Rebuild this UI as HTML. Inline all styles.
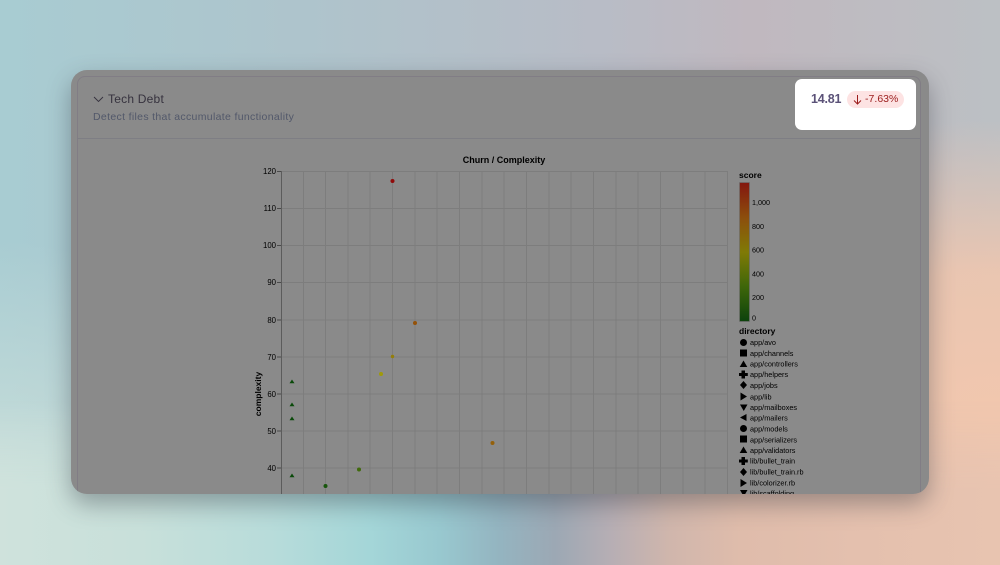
<!DOCTYPE html>
<html><head><meta charset="utf-8">
<style>
html,body{margin:0;padding:0;width:1000px;height:565px;overflow:hidden}
body{position:relative;font-family:"Liberation Sans",sans-serif;background:
radial-gradient(ellipse 400px 300px at 990px 420px,#f2c7ae 0%,rgba(238,198,175,.9) 50%,rgba(238,198,175,0) 100%),
radial-gradient(ellipse 280px 300px at 0px 540px,#cfe2dc 0%,rgba(207,226,220,0) 100%),
linear-gradient(90deg,#a8ccd2 0%,#aec4cc 30%,#b8bcc6 60%,#c0b8bf 75%,#bcc0c4 100%)}
.band{position:absolute;left:0;top:400px;width:1000px;height:165px;
background:linear-gradient(90deg,#cfe2dc 0,#c8e0da 140px,#b8dcda 270px,#a4d6d8 370px,#98c8cf 440px,#94b4c0 500px,#9ca8b4 555px,#b6aeb4 610px,#d0b6ac 670px,#dfbcab 740px,#e4c0ae 860px,#e8c4b0 1000px);
-webkit-mask-image:linear-gradient(180deg,rgba(0,0,0,0) 0,rgba(0,0,0,1) 90px);mask-image:linear-gradient(180deg,rgba(0,0,0,0) 0,rgba(0,0,0,1) 90px)}
.card{position:absolute;left:71px;top:70px;width:858px;height:424px;background:#8a8a8a;border-radius:16px;box-shadow:0 10px 24px rgba(50,55,65,.4);overflow:hidden}
.inner{position:absolute;left:6px;top:6px;width:844px;height:430px;border:1px solid #817d85;box-sizing:border-box;border-radius:8px 8px 0 0}
.div{position:absolute;left:6px;top:68px;width:844px;height:1px;background:#7e7e84}
.title{position:absolute;left:108px;top:92px;font:12px/14px "Liberation Sans",sans-serif;letter-spacing:.22px;color:#36323e}
.sub{position:absolute;left:93px;top:111px;font:10.5px/13px "Liberation Sans",sans-serif;letter-spacing:.33px;color:#52586a}
.hl{position:absolute;left:795px;top:79px;width:121px;height:51px;background:#fff;border-radius:7px}
.val{position:absolute;left:811px;top:92px;font:bold 12.5px/15px "Liberation Sans",sans-serif;letter-spacing:-.2px;color:#5b5278}
.badge{position:absolute;left:847px;top:91px;width:57px;height:17px;background:#fde3e3;border-radius:9px}
.badge span{position:absolute;left:18px;top:2px;font:10.5px/13px "Liberation Sans",sans-serif;letter-spacing:.02px;color:#9b1c1c;white-space:nowrap}
svg{position:absolute;left:0;top:0}
svg text{font-family:"Liberation Sans",sans-serif;fill:#000}
.soft{filter:blur(.3px)}
</style></head>
<body>
<div class="band"></div>
<div class="card"><div class="inner"></div><div class="div"></div></div>
<svg width="1000" height="565" viewBox="0 0 1000 565">
<defs>
<linearGradient id="g" x1="0" y1="1" x2="0" y2="0">
<stop offset="0" stop-color="#0c420c"/><stop offset=".25" stop-color="#3e660a"/><stop offset=".5" stop-color="#807a06"/><stop offset=".75" stop-color="#8c4e0c"/><stop offset="1" stop-color="#84160e"/>
</linearGradient>
<clipPath id="c"><rect x="71" y="70" width="858" height="424"/></clipPath>
</defs>
<path d="M94 97l4.500 4.500 4.500-4.500" fill="none" stroke="#36323e" stroke-width=".9"/>
<g clip-path="url(#c)"><g class="soft">
<text x="504" y="163" font-size="9" font-weight="bold" text-anchor="middle">Churn / Complexity</text>
<g stroke="#7d7d7d" stroke-width="1" fill="none">
<path d="M303.500 171V494M325.500 171V494M348 171V494M370 171V494M392.500 171V494M415 171V494M437 171V494M459.500 171V494M482 171V494M504 171V494M526.500 171V494M549 171V494M571 171V494M593.500 171V494M616 171V494M638 171V494M660.500 171V494M683 171V494M705 171V494M727.500 171V494"/>
<path d="M281 171.500H728M281 208.500H728M281 245.500H728M281 282.500H728M281 320H728M281 357H728M281 394H728M281 431H728M281 468H728"/>
</g>
<path d="M281.500 171V494" stroke="#5c5c5c" stroke-width="1"/>
<path d="M277 171.500H281M277 208.500H281M277 245.500H281M277 282.500H281M277 320H281M277 357H281M277 394H281M277 431H281M277 468H281" stroke="#4a4a4a" stroke-width="1"/>
<g font-size="7.800" text-anchor="end">
<text x="276" y="174">120</text><text x="276" y="211">110</text><text x="276" y="248">100</text><text x="276" y="285">90</text><text x="276" y="323">80</text><text x="276" y="360">70</text><text x="276" y="397">60</text><text x="276" y="434">50</text><text x="276" y="471">40</text>
</g>
<text transform="translate(262 394) rotate(-90)" font-size="8.500" font-weight="bold" text-anchor="middle" y="-1">complexity</text>
<circle cx="392.500" cy="181" r="2" fill="#900a0a"/>
<circle cx="415" cy="323" r="2" fill="#94520a"/>
<circle cx="392.500" cy="356.500" r="1.700" fill="#947e0a"/>
<circle cx="381" cy="374" r="2" fill="#a09a0a"/>
<circle cx="492.500" cy="443" r="2" fill="#94600a"/>
<circle cx="359" cy="469.500" r="2" fill="#406a0c"/>
<circle cx="325.500" cy="486" r="2" fill="#18560c"/>
<g fill="#0a4a0a">
<path d="M292 379.500l2.500 3.800h-5zM292 402.500l2.500 3.800h-5zM292 416.500l2.500 3.800h-5zM292 473.500l2.500 3.800h-5z"/>
</g>
<text x="739" y="178" font-size="8.500" font-weight="bold">score</text>
<rect x="739.500" y="182.500" width="10" height="139" fill="url(#g)" stroke="#6e6e6e" stroke-width=".7"/>
<g font-size="7.200">
<text x="752" y="205">1,000</text><text x="752" y="229">800</text><text x="752" y="252.500">600</text><text x="752" y="276.500">400</text><text x="752" y="300">200</text><text x="752" y="320.500">0</text>
</g>
<text x="739" y="334" font-size="8.500" font-weight="bold">directory</text>
<g font-size="7.300" fill="#000">
<text x="750" y="345">app/avo</text>
<text x="750" y="356">app/channels</text>
<text x="750" y="366.500">app/controllers</text>
<text x="750" y="377">app/helpers</text>
<text x="750" y="388">app/jobs</text>
<text x="750" y="399.500">app/lib</text>
<text x="750" y="410">app/mailboxes</text>
<text x="750" y="420.500">app/mailers</text>
<text x="750" y="431.500">app/models</text>
<text x="750" y="442.500">app/serializers</text>
<text x="750" y="453">app/validators</text>
<text x="750" y="463.500">lib/bullet_train</text>
<text x="750" y="474.500">lib/bullet_train.rb</text>
<text x="750" y="485.500">lib/colorizer.rb</text>
<text x="750" y="496">lib/scaffolding</text>
</g>
<g fill="#000">
<circle cx="743.500" cy="342.500" r="3.500"/>
<rect x="740" y="349.500" width="7" height="7"/>
<path d="M743.500 360.500l3.800 6.500h-7.600z"/>
<path d="M741.500 370.500h3.500v2.500h2.800v3h-2.800v2.500h-3.500v-2.500h-2.500v-3h2.500z"/>
<path d="M743.500 381l3.500 4-3.500 4-3.500-4z"/>
<path d="M740.500 392.500l6.500 4-6.500 4z"/>
<path d="M740 404.500h7.500l-3.750 6.500z"/>
<path d="M746.500 414v7l-6.500-3.500z"/>
<circle cx="743.500" cy="428.500" r="3.500"/>
<rect x="740" y="435.500" width="7" height="7"/>
<path d="M743.500 446.500l3.800 6.500h-7.600z"/>
<path d="M741.500 457h3.500v2.500h2.800v3h-2.800v2.500h-3.500v-2.500h-2.500v-3h2.500z"/>
<path d="M743.500 468l3.500 4-3.500 4-3.500-4z"/>
<path d="M740.500 479l6.500 4-6.500 4z"/>
<path d="M740 490h7.500l-3.750 6.500z"/>
</g>
</g></g>
</svg>
<div class="title">Tech Debt</div>
<div class="sub">Detect files that accumulate functionality</div>
<div class="hl"></div>
<div class="val">14.81</div>
<div class="badge"><svg width="14" height="17" style="left:4px;top:0"><path d="M6.500 4v9M3 9.500l3.500 3.500 3.500-3.500" fill="none" stroke="#9b1c1c" stroke-width="1"/></svg><span>-7.63%</span></div>
</body></html>
